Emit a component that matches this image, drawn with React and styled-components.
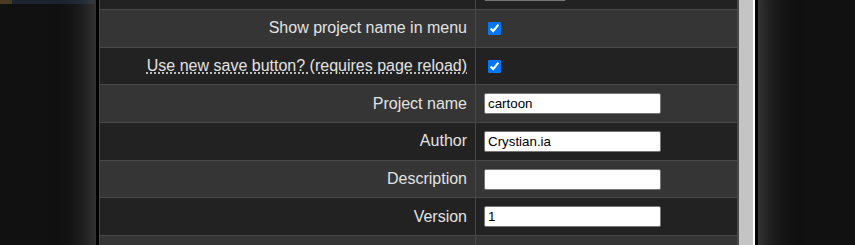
import React from "react";
import styled, { createGlobalStyle } from "styled-components";

const Global = createGlobalStyle`
  html, body { margin: 0; padding: 0; background: #111111; overflow: hidden; }
  body { font-family: "Liberation Sans", Arial, sans-serif; }
`;

const Page = styled.div`
  display: flex;
  width: 855px;
  height: 245px;
  overflow: hidden;
`;

const Gutter = styled.div`
  width: ${(p) => p.$w}px;
  flex: none;
`;

const TopBand = styled.div`
  height: 4px;
  width: 95px;
  background: linear-gradient(90deg, #4a3a22 0 12px, #1b2430 12px);
`;

const Modal = styled.div`
  flex: none;
  align-self: flex-start;
  margin-top: -27.5px;
  display: flex;
  border-left: 3px solid #000;
  border-right: 3px solid #000;
  box-shadow: 0 0 30px 3px #4c4c4c;
  background: #222;
`;

const Table = styled.div`
  width: 640px;
  box-sizing: border-box;
  border-left: 1px solid #484848;
  border-right: 2px solid #484848;
  display: flex;
  flex-direction: column;
`;

const Row = styled.div`
  display: grid;
  grid-template-columns: 376px 1fr;
  height: 37.67px;
  box-sizing: border-box;
  border-bottom: 1px solid #484848;
  background: ${(p) => (p.$alt ? "#353535" : "#222222")};
`;

const Label = styled.div`
  box-sizing: border-box;
  border-right: 1px solid #484848;
  display: flex;
  align-items: center;
  justify-content: flex-end;
  padding-right: 8px;
  color: #e2e2e2;
  font-size: 16px;
`;

const Hint = styled.span`
  text-decoration: underline dotted;
  text-underline-offset: 2px;
  cursor: help;
`;

const Value = styled.div`
  display: flex;
  align-items: center;
  padding-left: 8px;
`;

const Check = styled.input.attrs({ type: "checkbox" })`
  width: 13px;
  height: 13px;
  margin: 0 0 0 4px;
  accent-color: #0075ff;
`;

const TextInput = styled.input.attrs({ type: "text" })`
  box-sizing: border-box;
  width: ${(p) => p.$w || 177}px;
  height: 21px;
  margin: 0;
  padding: 1px 3px;
  border: 1px solid #767676;
  border-radius: 2px;
  background: #fff;
  color: #000;
  font-family: "Liberation Sans", Arial, sans-serif;
  font-size: 13.33px;
  outline: none;
`;

const ScrollTrack = styled.div`
  width: 14px;
  background: #c4c4c4;
  border-right: 2px solid #ffffff;
`;

const rows = [
  { label: "Project name", value: "cartoon" },
  { label: "Author", value: "Crystian.ia" },
  { label: "Description", value: "" },
  { label: "Version", value: "1" },
];

export default function App() {
  return (
    <>
      <Global />
      <Page>
        <Gutter $w={96}>
          <TopBand />
        </Gutter>
        <Modal>
          <Table>
            <Row>
              <Label />
              <Value>
                <TextInput $w={82} defaultValue="" />
              </Value>
            </Row>
            <Row $alt>
              <Label>Show project name in menu</Label>
              <Value>
                <Check defaultChecked />
              </Value>
            </Row>
            <Row>
              <Label>
                <Hint title="Use new save button">Use new save button? (requires page reload)</Hint>
              </Label>
              <Value>
                <Check defaultChecked />
              </Value>
            </Row>
            {rows.map((r, i) => (
              <Row key={r.label} $alt={i % 2 === 0}>
                <Label>{r.label}</Label>
                <Value>
                  <TextInput defaultValue={r.value} />
                </Value>
              </Row>
            ))}
            <Row $alt>
              <Label />
              <Value />
            </Row>
          </Table>
          <ScrollTrack />
        </Modal>
        <Gutter $w={97} />
      </Page>
    </>
  );
}
